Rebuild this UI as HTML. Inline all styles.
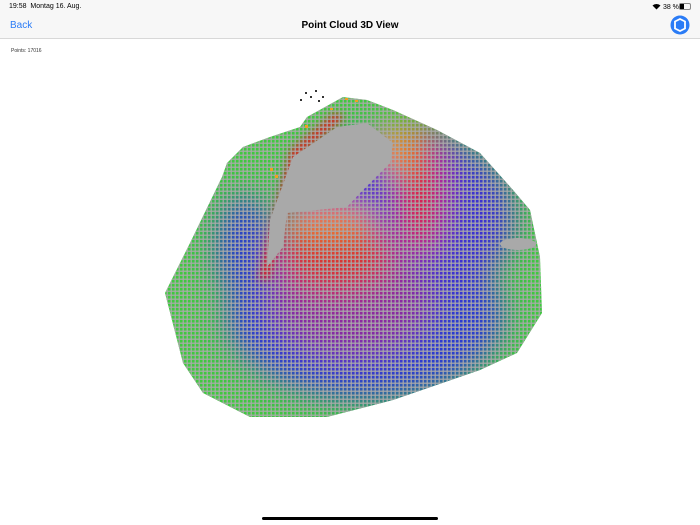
<!DOCTYPE html>
<html><head><style>
body{margin:0;width:700px;height:525px;background:#fff;font-family:"Liberation Sans",sans-serif;position:relative;overflow:hidden}
.hdr{position:absolute;left:0;top:0;width:700px;height:38px;background:#f7f7f7;border-bottom:1px solid #d8d8d8}
.st{position:absolute;top:3px;font-size:7px;color:#000}
.back{position:absolute;left:10px;top:20px;font-size:10px;color:#2b7cf6}
.title{position:absolute;left:0;width:700px;text-align:center;top:20px;font-size:10px;font-weight:bold;color:#000}
.pts{position:absolute;left:11px;top:48px;font-size:5px;color:#333}
.home{position:absolute;left:262px;top:517px;width:176px;height:3px;border-radius:2px;background:#000}
</style></head><body>
<div class="hdr">
<div class="st" style="left:9px">19:58&nbsp; Montag 16. Aug.</div>
<div class="st" style="left:652px">
<svg width="9" height="7" viewBox="0 0 9 7" style="vertical-align:-1px"><path d="M4.5 6.5L0.5 2.5A6 6 0 0 1 8.5 2.5Z" fill="#000"/></svg> 38 %</div>
<div style="position:absolute;left:679px;top:3px;width:10px;height:5px;border:1px solid #888;border-radius:2px"><div style="width:4px;height:5px;background:#000"></div></div>
<div class="back">Back</div>
<div class="title">Point Cloud 3D View</div>
<svg style="position:absolute;left:670px;top:15px" width="20" height="20" viewBox="0 0 20 20"><circle cx="10" cy="10" r="9.5" fill="#2b7cf6"/><polygon points="10,4 15,6.5 15,13.5 10,16 5,13.5 5,6.5" fill="none" stroke="#fff" stroke-width="1.8"/></svg>
</div>
<div class="pts">Points: 17016</div>
<svg style="position:absolute;left:0;top:0" width="700" height="525">
<defs>
<clipPath id="c"><polygon points="165,293 190,243 222,177 227,163 243,147 270,137 300,127 307,117 343,97 367,100 393,110 437,130 480,153 513,190 530,210 540,257 542,313 517,353 480,370 393,400 327,417 250,417 203,393 183,363"/></clipPath>
<filter id="b" x="-50%" y="-50%" width="200%" height="200%"><feGaussianBlur stdDeviation="14"/></filter>
<filter id="b2" x="-50%" y="-50%" width="200%" height="200%"><feGaussianBlur stdDeviation="4"/></filter>
<pattern id="g" width="4" height="4" patternUnits="userSpaceOnUse"><rect x="0" y="2.5" width="4" height="1.5" fill="#aaa" opacity=".8"/><rect x="2.5" y="0" width="1.5" height="4" fill="#aaa" opacity=".8"/></pattern>
</defs>
<g clip-path="url(#c)">
<rect x="150" y="80" width="400" height="350" fill="#40c840"/>
<g filter="url(#b)">
<ellipse cx="365" cy="315" rx="140" ry="85" fill="#2a3ad0"/>
<ellipse cx="400" cy="220" rx="115" ry="90" fill="#3a30d0"/>
<ellipse cx="245" cy="250" rx="30" ry="55" fill="#2a40c8"/>
<ellipse cx="350" cy="300" rx="80" ry="55" fill="#8a2aa0"/>
<ellipse cx="335" cy="255" rx="60" ry="40" fill="#d83030"/>
<ellipse cx="420" cy="190" rx="22" ry="65" fill="#e02028"/>
<ellipse cx="330" cy="220" rx="45" ry="18" fill="#f08030"/>
<ellipse cx="395" cy="150" rx="20" ry="25" fill="#f09020"/>
</g>
<path d="M258,280 L290,150 L335,112 L345,118 L300,155 L270,280 Z" fill="#d82828" filter="url(#b2)"/>
<rect x="150" y="80" width="400" height="350" fill="url(#g)"/>
<polygon points="367,123 393,143 390,163 360,193 347,207 287,213 283,247 267,267 270,220 293,157 337,127" fill="#a9a9a9"/>
<ellipse cx="518" cy="244" rx="18" ry="6" fill="#a9a9a9"/>
</g>
<g fill="#333"><rect x="305" y="92" width="2" height="2"/><rect x="310" y="96" width="2" height="2"/><rect x="315" y="90" width="2" height="2"/><rect x="300" y="99" width="2" height="2"/><rect x="318" y="100" width="2" height="2"/><rect x="322" y="96" width="2" height="2"/></g>
<g fill="#f0a020"><rect x="345" y="98" width="3" height="2"/><rect x="330" y="108" width="3" height="2"/><rect x="305" y="125" width="3" height="3"/><rect x="270" y="168" width="3" height="3"/><rect x="275" y="175" width="3" height="3"/><rect x="355" y="100" width="3" height="2"/></g>
</svg>
<div class="home"></div>
</body></html>
